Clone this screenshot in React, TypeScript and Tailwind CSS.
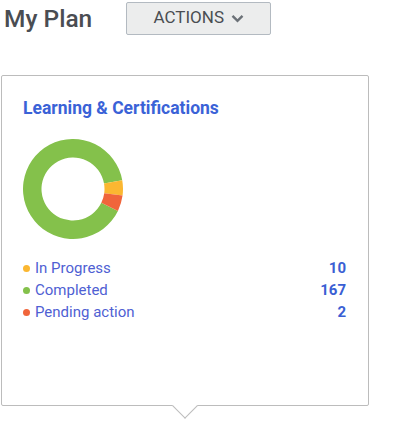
import React from "react";

function polar(cx: number, cy: number, r: number, deg: number) {
  const a = (deg * Math.PI) / 180;
  return [cx + r * Math.cos(a), cy + r * Math.sin(a)];
}

function arc(cx: number, cy: number, ro: number, ri: number, a0: number, a1: number) {
  const [x0, y0] = polar(cx, cy, ro, a0);
  const [x1, y1] = polar(cx, cy, ro, a1);
  const [x2, y2] = polar(cx, cy, ri, a1);
  const [x3, y3] = polar(cx, cy, ri, a0);
  const large = a1 - a0 > 180 ? 1 : 0;
  return `M${x0} ${y0} A${ro} ${ro} 0 ${large} 1 ${x1} ${y1} L${x2} ${y2} A${ri} ${ri} 0 ${large} 0 ${x3} ${y3} Z`;
}

function Donut() {
  const cx = 50, cy = 50, ro = 50, ri = 31.5;
  return (
    <svg width="100" height="100" viewBox="0 0 100 100">
      <path d={arc(cx, cy, ro, ri, 26, 350)} fill="#84c14b" />
      <path d={arc(cx, cy, ro, ri, -10, 7.6)} fill="#fbb731" />
      <path d={arc(cx, cy, ro, ri, 7.6, 26)} fill="#f0653b" />
    </svg>
  );
}

const rows = [
  { label: "In Progress", value: "10", color: "bg-[#fbb731]" },
  { label: "Completed", value: "167", color: "bg-[#84c14b]" },
  { label: "Pending action", value: "2", color: "bg-[#f0653b]" },
];

export default function App() {
  return (
    <div className="w-[401px] h-[429px] bg-white font-['Roboto',sans-serif] relative">
      <div className="flex items-center h-[35px]">
        <h1 className="ml-[4px] mt-[3px] text-[24.5px] font-medium text-[#4a4d52] leading-none">My Plan</h1>
        <button className="ml-[34px] mt-[1px] w-[145px] h-[33px] bg-[#eceded] border border-[#b3bac1] rounded-[2px] flex items-center justify-center gap-[7px] text-[17px] text-[#4a4d52]">
          <span>ACTIONS</span>
          <svg width="13" height="9" viewBox="0 0 13 9">
            <path d="M1.5 1.8 L6.5 6.8 L11.5 1.8" fill="none" stroke="#6b7177" strokeWidth="2.4" />
          </svg>
        </button>
      </div>
      <div className="relative ml-[1px] mt-[40px] w-[368px] h-[331px] border border-[#bcbcbc] rounded-[2px] bg-white px-[21px] pt-[21px]">
        <h2 className="text-[17.5px] font-bold text-[#3a62d7] leading-[23px]">Learning &amp; Certifications</h2>
        <div className="mt-[19px]">
          <Donut />
        </div>
        <div className="mt-[18px] flex flex-col">
          {rows.map((r) => (
            <div key={r.label} className="flex items-center h-[22px]">
              <span className={`w-[7px] h-[7px] rounded-full ${r.color}`} />
              <span className="ml-[5px] text-[15px] text-[#4f5fd3]">{r.label}</span>
              <span className="ml-auto mr-[1px] text-[15px] font-bold text-[#3a5fd4]">{r.value}</span>
            </div>
          ))}
        </div>
        <div className="absolute left-1/2 -bottom-[10px] w-[18px] h-[18px] -translate-x-1/2 rotate-45 bg-white border-r border-b border-[#bcbcbc]" />
      </div>
    </div>
  );
}
